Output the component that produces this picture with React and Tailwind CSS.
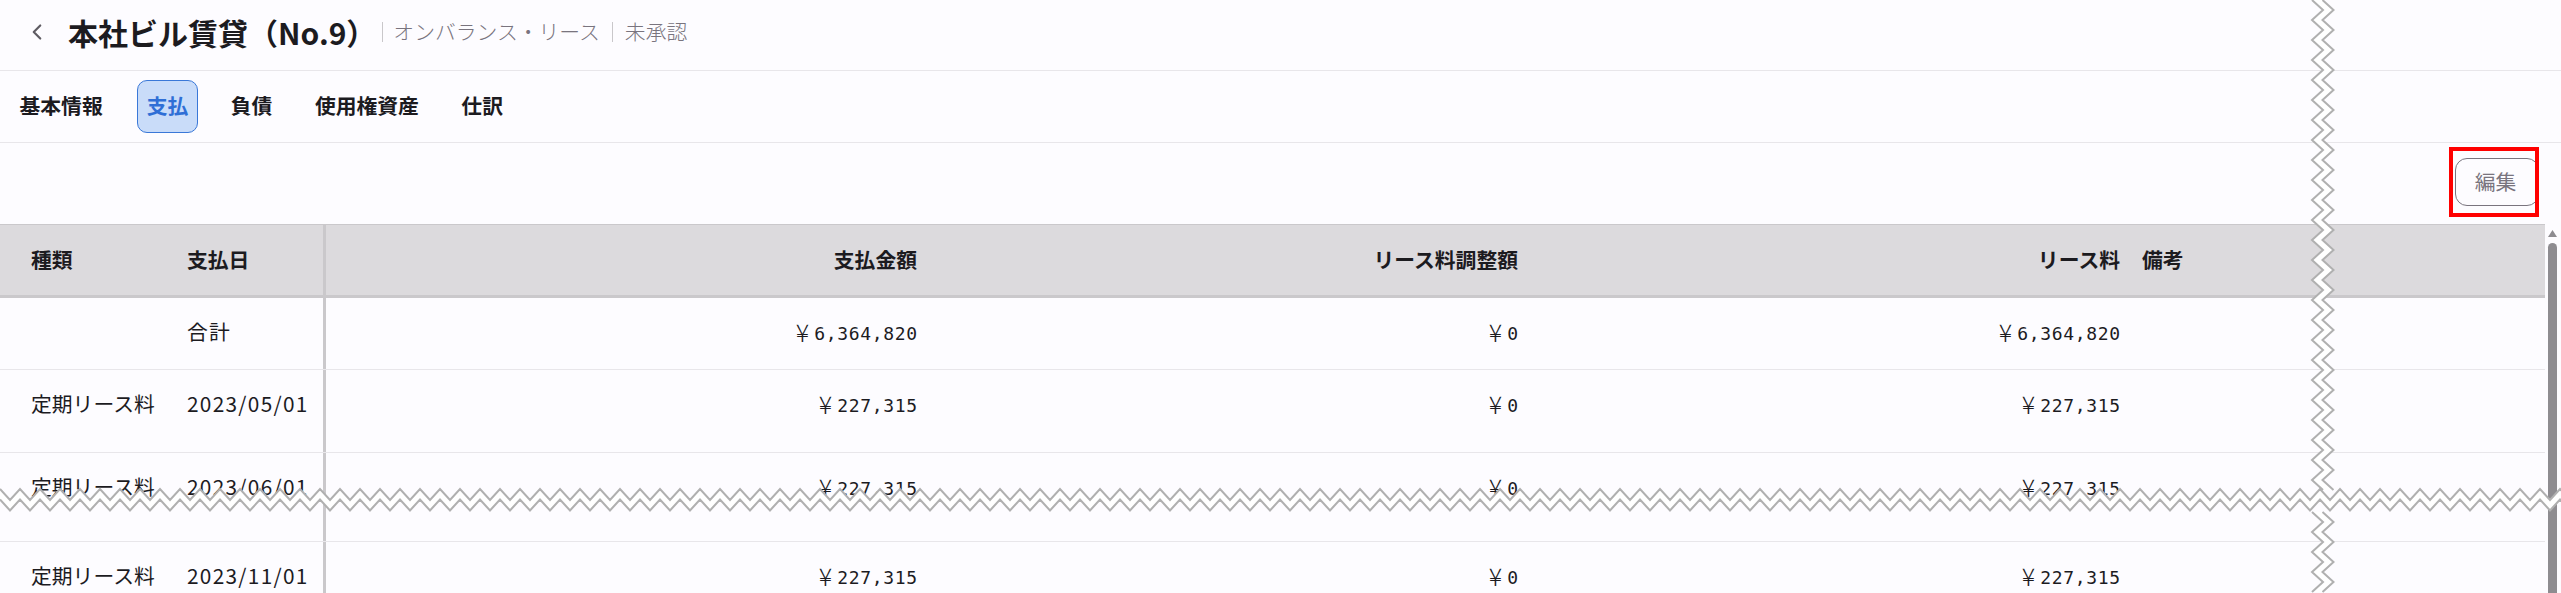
import { ChevronLeft } from "lucide-react";

const rows = [
  { type: "", date: "合計", pay: "6,364,820", adj: "0", lease: "6,364,820", h: "h-[72px]" },
  { type: "定期リース料", date: "2023/05/01", pay: "227,315", adj: "0", lease: "227,315", h: "h-[83px]" },
  { type: "定期リース料", date: "2023/06/01", pay: "227,315", adj: "0", lease: "227,315", h: "h-[89px]" },
  { type: "定期リース料", date: "2023/11/01", pay: "227,315", adj: "0", lease: "227,315", h: "h-[83px]" },
];

const tabs = ["基本情報", "支払", "負債", "使用権資産", "仕訳"];

// zigzag points for the "cut" marks
function zigH(y0, amp, x1) {
  const pts = [];
  for (let x = 0, i = 0; x <= x1; x += 10, i++) {
    pts.push(`${x},${i % 2 === 0 ? y0 : y0 + amp}`);
  }
  return pts;
}

function zigV(x0, amp, y0, y1) {
  const pts = [];
  for (let y = y0, i = 0; y <= y1; y += 10, i++) {
    pts.push(`${i % 2 === 0 ? x0 : x0 + amp},${y}`);
  }
  return pts;
}

function Band({ a, b }) {
  return (
    <>
      <polygon points={[...a, ...[...b].reverse()].join(" ")} fill="#ffffff" />
      <polyline points={a.join(" ")} fill="none" stroke="#b0b0b0" strokeWidth="2" />
      <polyline points={b.join(" ")} fill="none" stroke="#b0b0b0" strokeWidth="2" />
    </>
  );
}

function Money({ value }) {
  return (
    <span className="inline-flex items-center justify-end">
      <span className="mr-[5px] -mt-[4px] text-[25px] font-light leading-none font-['Noto_Sans_CJK_JP',sans-serif]">¥</span>
      <span className="font-['DejaVu_Sans_Mono',monospace] text-[18px] tracking-[0.65px] mr-[-0.65px]">{value}</span>
    </span>
  );
}

export default function App() {
  return (
    <div className="relative h-[593px] w-[2561px] overflow-hidden bg-[#fdfcff] text-[#1c1b1f] text-[20.8px] font-['Noto_Sans_CJK_JP',sans-serif]">
      {/* TITLE */}
      <div className="flex h-[71px] items-center border-b border-[#e8e6ea] pb-[6px]">
        <ChevronLeft className="ml-[24px] h-[26px] w-[26px] text-[#5f5c63]" strokeWidth={2} />
        <h1 className="ml-[18px] text-[30px] font-bold leading-none">本社ビル賃貸（No.9）</h1>
        <div className="ml-[6px] flex items-center font-light text-[#79747e]">
          <span className="mr-[10px] h-[20px] w-px bg-[#c9c7ca]" />
          <span>オンバランス・リース</span>
          <span className="mx-[12px] h-[20px] w-px bg-[#c9c7ca]" />
          <span>未承認</span>
        </div>
      </div>

      {/* TABS */}
      <div className="flex h-[72px] items-center gap-[23.5px] border-b border-[#e8e6ea] pl-[10px]">
        {tabs.map((t, i) => (
          <div
            key={t}
            className={`flex h-[53px] items-center rounded-[10px] border px-[8.5px] pb-[3px] font-bold leading-none ${
              t === "支払"
                ? "border-[#3a78d8] bg-[#c9dcf9] text-[#2f6fd6]"
                : "border-transparent"
            } ${i === 0 ? "mr-[1.5px]" : ""}`}
          >
            {t}
          </div>
        ))}
      </div>

      {/* TOOLBAR */}
      <div className="flex h-[81px] items-start justify-end pr-[22px] pt-[4px]">
        <div className="h-[70px] w-[90px] overflow-hidden border-4 border-[#ff0000] pl-[2px] pt-[7px]">
          <button className="h-[48px] w-[84px] shrink-0 rounded-[12px] border border-[#79747e] pr-[3px] text-[#79747e]">
            編集
          </button>
        </div>
      </div>

      {/* TABLE */}
      <div className="flex">
        <div className="w-[2545px]">
          <div className="grid h-[74px] grid-cols-[187px_139px_591px_601px_602px_1fr] items-center border-t border-b-[3px] border-[#cac8cb] bg-[#dcdadd] font-bold">
            <div className="pl-[31px]">種類</div>
            <div className="flex h-full items-center border-r-[3px] border-[#cac8cb]">支払日</div>
            <div className="text-right">支払金額</div>
            <div className="text-right">リース料調整額</div>
            <div className="text-right">リース料</div>
            <div className="pl-[22px]">備考</div>
          </div>
          {rows.map((r) => (
            <div
              key={r.date}
              className={`grid ${r.h} grid-cols-[187px_139px_591px_601px_602px_1fr] border-b border-[#e8e6ea]`}
            >
              <div className="pl-[31px] pt-[18px]">{r.type}</div>
              <div className="border-r-[3px] border-[#cac8cb] pt-[18px] tracking-[1.3px]">{r.date}</div>
              <div className="pt-[20px] text-right"><Money value={r.pay} /></div>
              <div className="pt-[20px] text-right"><Money value={r.adj} /></div>
              <div className="pt-[20px] text-right"><Money value={r.lease} /></div>
              <div />
            </div>
          ))}
        </div>

        {/* SCROLLBAR */}
        <div className="flex w-[16px] flex-col items-start pl-[3px] pt-[6px]">
          <svg width="9" height="7" viewBox="0 0 9 7"><polygon points="4.5,0 9,7 0,7" fill="#8e8c90" /></svg>
          <div className="mt-[6px] h-[360px] w-[9px] rounded-t-[5px] bg-[#8e8c90]" />
        </div>
      </div>

      {/* CUT MARKS */}
      <svg className="pointer-events-none absolute inset-0" width="2561" height="593">
        <Band a={zigV(2312, 11, 0, 490)} b={zigV(2322.5, 11, 0, 490)} />
        <Band a={zigV(2312, 11, 512, 600)} b={zigV(2322.5, 11, 512, 600)} />
        <Band a={zigH(489, 11, 2570)} b={zigH(499.5, 11, 2570)} />
      </svg>
    </div>
  );
}
